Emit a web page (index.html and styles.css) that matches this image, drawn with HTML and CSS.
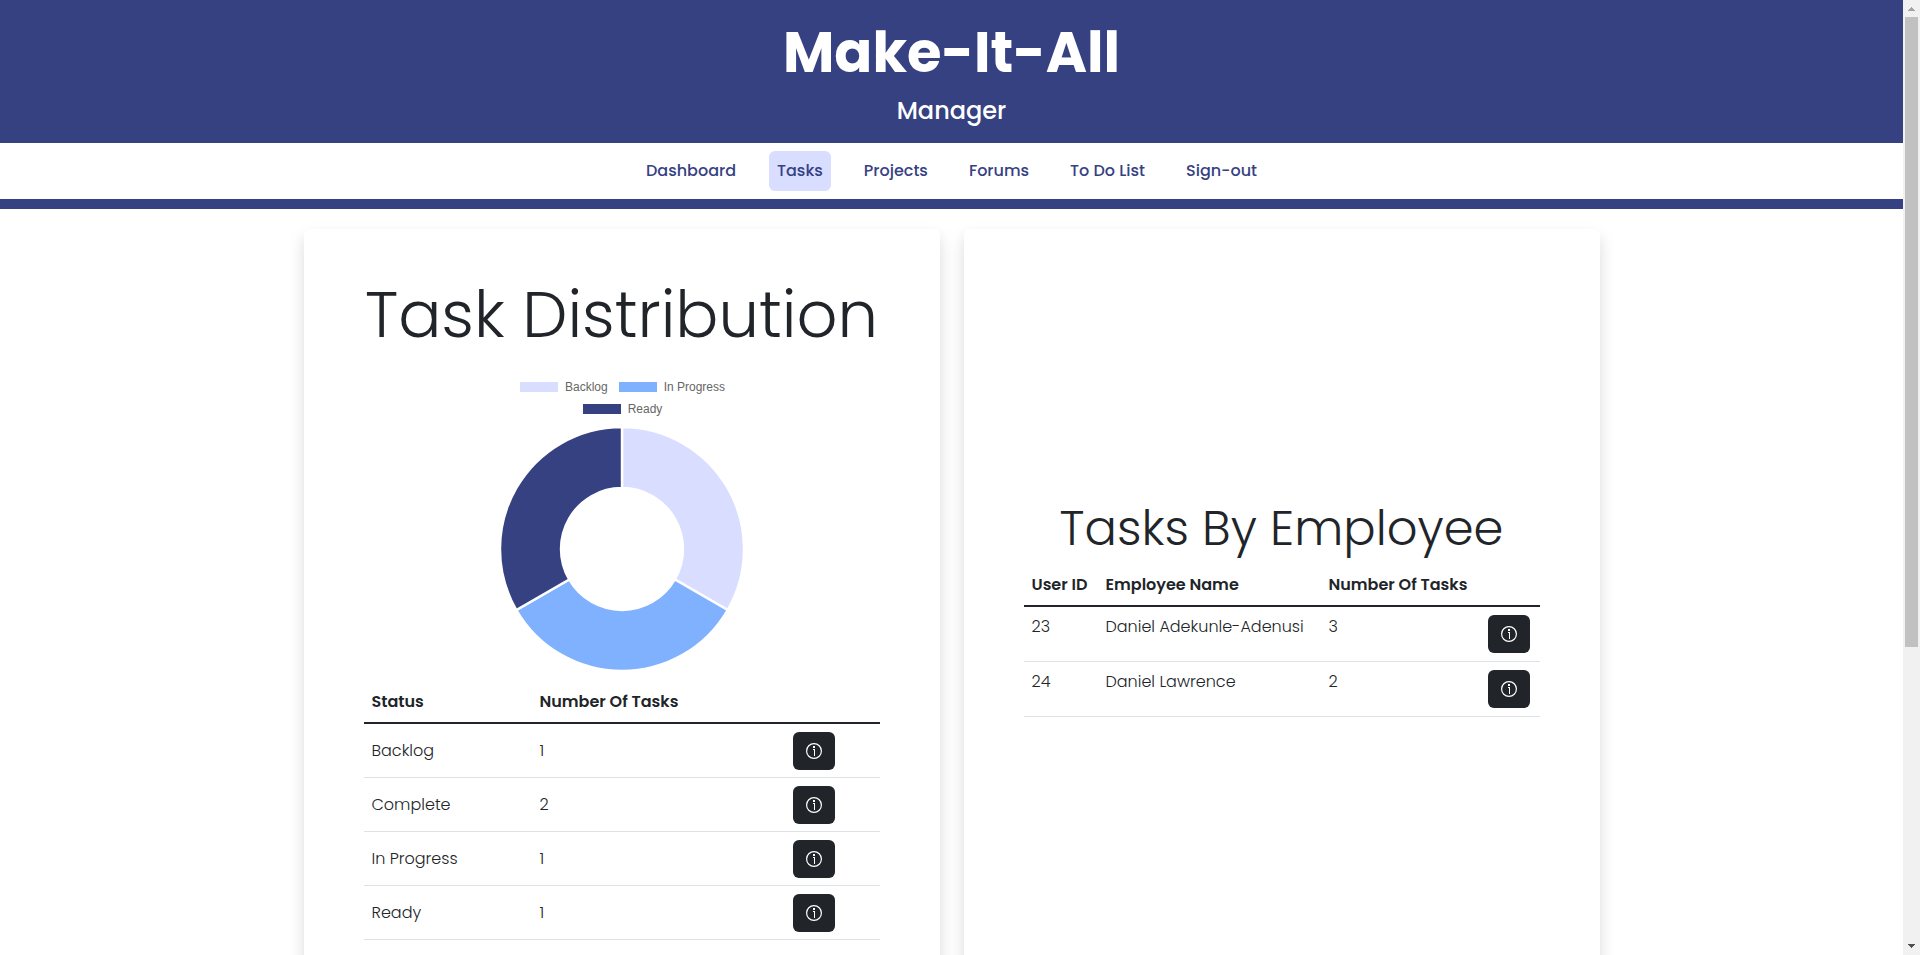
FILE: index.html
```html
<!DOCTYPE html>
<html lang="en">
<head>
<meta charset="utf-8">
<title>Make-It-All | Tasks</title>
<link rel="stylesheet" href="styles.css">
</head>
<body>
<svg class="sprite" aria-hidden="true">
  <symbol id="info" viewBox="0 0 16 16">
    <circle cx="8" cy="8" r="7.400" fill="none" stroke="currentColor" stroke-width="1.200"/>
    <path d="M7 3h2v2H7zM7 6h2v7H8V7H7z" fill="currentColor"/>
  </symbol>
</svg>
<div class="page">
  <header class="banner">
    <h1 class="brand">Make-It-All</h1>
    <p class="role">Manager</p>
  </header>
  <nav class="nav">
    <a class="nav-link" href="#">Dashboard</a>
    <a class="nav-link active" href="#">Tasks</a>
    <a class="nav-link" href="#">Projects</a>
    <a class="nav-link" href="#">Forums</a>
    <a class="nav-link" href="#">To Do List</a>
    <a class="nav-link" href="#">Sign-out</a>
  </nav>
  <main class="cards">
    <section class="card">
      <h2 class="title-large">Task Distribution</h2>
      <figure class="chart">
        <figcaption class="legend">
          <span class="key"><i class="swatch backlog"></i>Backlog</span>
          <span class="key"><i class="swatch progress"></i>In Progress</span>
          <span class="key"><i class="swatch ready"></i>Ready</span>
        </figcaption>
        <svg class="donut" viewBox="-122 -122 244 244" role="img" aria-label="Task distribution">
          <g stroke="#fff" stroke-width="2.400">
            <path fill="#d9ddff" d="M0-122A122 122 0 0 1 105.660 61L52.830 30.500A61 61 0 0 0 0-61z"/>
            <path fill="#80b1ff" d="M105.660 61A122 122 0 0 1-105.660 61L-52.830 30.500A61 61 0 0 0 52.830 30.500z"/>
            <path fill="#364182" d="M-105.660 61A122 122 0 0 1 0-122V-61A61 61 0 0 0-52.830 30.500z"/>
          </g>
        </svg>
      </figure>
      <table class="table status-table">
        <colgroup><col class="c-status"><col><col class="c-action"></colgroup>
        <thead><tr><th>Status</th><th>Number Of Tasks</th><th></th></tr></thead>
        <tbody>
          <tr><td>Backlog</td><td>1</td><td class="action"><button class="btn" aria-label="Backlog details"><svg class="icon"><use href="#info"/></svg></button></td></tr>
          <tr><td>Complete</td><td>2</td><td class="action"><button class="btn" aria-label="Complete details"><svg class="icon"><use href="#info"/></svg></button></td></tr>
          <tr><td>In Progress</td><td>1</td><td class="action"><button class="btn" aria-label="In Progress details"><svg class="icon"><use href="#info"/></svg></button></td></tr>
          <tr><td>Ready</td><td>1</td><td class="action"><button class="btn" aria-label="Ready details"><svg class="icon"><use href="#info"/></svg></button></td></tr>
        </tbody>
      </table>
    </section>
    <section class="card card-centered">
      <h2 class="title">Tasks By Employee</h2>
      <table class="table employee-table">
        <colgroup><col class="c-id"><col class="c-name"><col><col class="c-info"></colgroup>
        <thead><tr><th>User ID</th><th>Employee Name</th><th>Number Of Tasks</th><th></th></tr></thead>
        <tbody>
          <tr><td>23</td><td>Daniel Adekunle-Adenusi</td><td>3</td><td class="action"><button class="btn" aria-label="Daniel Adekunle-Adenusi details"><svg class="icon"><use href="#info"/></svg></button></td></tr>
          <tr><td>24</td><td>Daniel Lawrence</td><td>2</td><td class="action"><button class="btn" aria-label="Daniel Lawrence details"><svg class="icon"><use href="#info"/></svg></button></td></tr>
        </tbody>
      </table>
    </section>
  </main>
</div>
<div class="scrollbar" aria-hidden="true">
  <svg class="arrow" viewBox="0 0 17 17"><path fill="#a3a3a3" d="M5 11V10h1V9h1V8h1V7h1v1h1v1h1v1h1v1z"/></svg>
  <div class="track"><div class="thumb"></div></div>
  <svg class="arrow" viewBox="0 0 17 17"><path fill="#505050" d="M5 6v1h1v1h1v1h1v1h1V9h1V8h1V7h1V6z"/></svg>
</div>
</body>
</html>
```
FILE: styles.css
```css
* {
  box-sizing: border-box;
}

body {
  display: flex;
  height: 100vh;
  margin: 0;
  overflow: hidden;
  background: #fff;
  color: #212529;
  font-family: Poppins, Inter, sans-serif;
  font-size: 16px;
  font-weight: 300;
  line-height: 24px;
}

.sprite {
  display: none;
}

.page {
  flex: 1;
  min-width: 0;
  overflow: hidden;
}

.banner {
  padding: 16px 0;
  background: #364182;
  color: #fff;
  text-align: center;
}

.brand {
  margin: 0 0 6px;
  font-size: 56px;
  font-weight: 700;
  line-height: 74px;
}

.role {
  margin: 0;
  font-size: 24px;
  font-weight: 500;
  line-height: 29px;
  padding-bottom: 2px;
}

.nav {
  display: flex;
  justify-content: center;
  gap: 25px;
  padding: 8px;
  border-bottom: 10px solid #364182;
}

.nav-link {
  padding: 8px;
  border-radius: 6px;
  color: #364182;
  font-weight: 500;
  text-decoration: none;
}

.nav-link.active {
  background: #d9ddff;
}

.cards {
  display: grid;
  grid-template-columns: repeat(2, minmax(0, 1fr));
  gap: 24px;
  max-width: 1296px;
  margin: 20px auto;
}

.card {
  padding: 48px 60px;
  border-radius: 6px;
  background: #fff;
  box-shadow: 0 8px 16px rgba(0, 0, 0, 0.15);
}

.card-centered {
  display: flex;
  flex-direction: column;
  justify-content: center;
}

.title-large {
  margin: 0 0 22px;
  font-size: 64px;
  font-weight: 300;
  line-height: 75px;
  text-align: center;
  white-space: nowrap;
}

.title {
  margin: 0 0 7px;
  font-size: 48px;
  font-weight: 300;
  line-height: 58px;
  text-align: center;
  white-space: nowrap;
}

.chart {
  display: flex;
  flex-direction: column;
  align-items: center;
  margin: 0 0 11px;
}

.legend {
  display: flex;
  flex-wrap: wrap;
  justify-content: center;
  gap: 8px 11px;
  width: 244px;
  margin-bottom: 11px;
  padding: 6px 0 0 2px;
  color: #666;
  font-family: "Liberation Sans", Arial, sans-serif;
  font-size: 12px;
  font-weight: 400;
  line-height: 14px;
}

.key {
  display: flex;
  align-items: center;
  gap: 7px;
}

.swatch {
  width: 38px;
  height: 10px;
}

.backlog {
  background: #d9ddff;
}

.progress {
  background: #80b1ff;
}

.ready {
  background: #364182;
}

.donut {
  width: 244px;
  height: 244px;
}

.table {
  width: 100%;
  margin: 0 0 16px;
  border-collapse: separate;
  border-spacing: 0;
  table-layout: fixed;
  text-align: left;
}

.table th {
  height: 42px;
  padding: 8px;
  border-bottom: 2px solid #212529;
  font-weight: 600;
  white-space: nowrap;
}

.table td {
  padding: 8px;
  border-bottom: 1px solid #dee2e6;
  vertical-align: top;
  white-space: nowrap;
}

.status-table td {
  padding-bottom: 7px;
  vertical-align: middle;
}

.c-status {
  width: 168px;
}

.c-action {
  width: 132px;
}

.c-id {
  width: 74px;
}

.c-name {
  width: 223px;
}

.c-info {
  width: 62px;
}

.table .action {
  text-align: center;
}

.btn {
  display: inline-flex;
  align-items: center;
  justify-content: center;
  width: 42px;
  height: 38px;
  padding: 0;
  border: 0;
  border-radius: 6px;
  background: #212529;
  color: #fff;
  vertical-align: top;
}

.icon {
  width: 16px;
  height: 16px;
}

.scrollbar {
  display: flex;
  flex-direction: column;
  width: 17px;
  background: #f1f1f1;
}

.arrow {
  width: 17px;
  height: 17px;
}

.track {
  flex: 1;
  padding: 0 2px;
}

.thumb {
  height: 68.4%;
  background: #c1c1c1;
}
```
